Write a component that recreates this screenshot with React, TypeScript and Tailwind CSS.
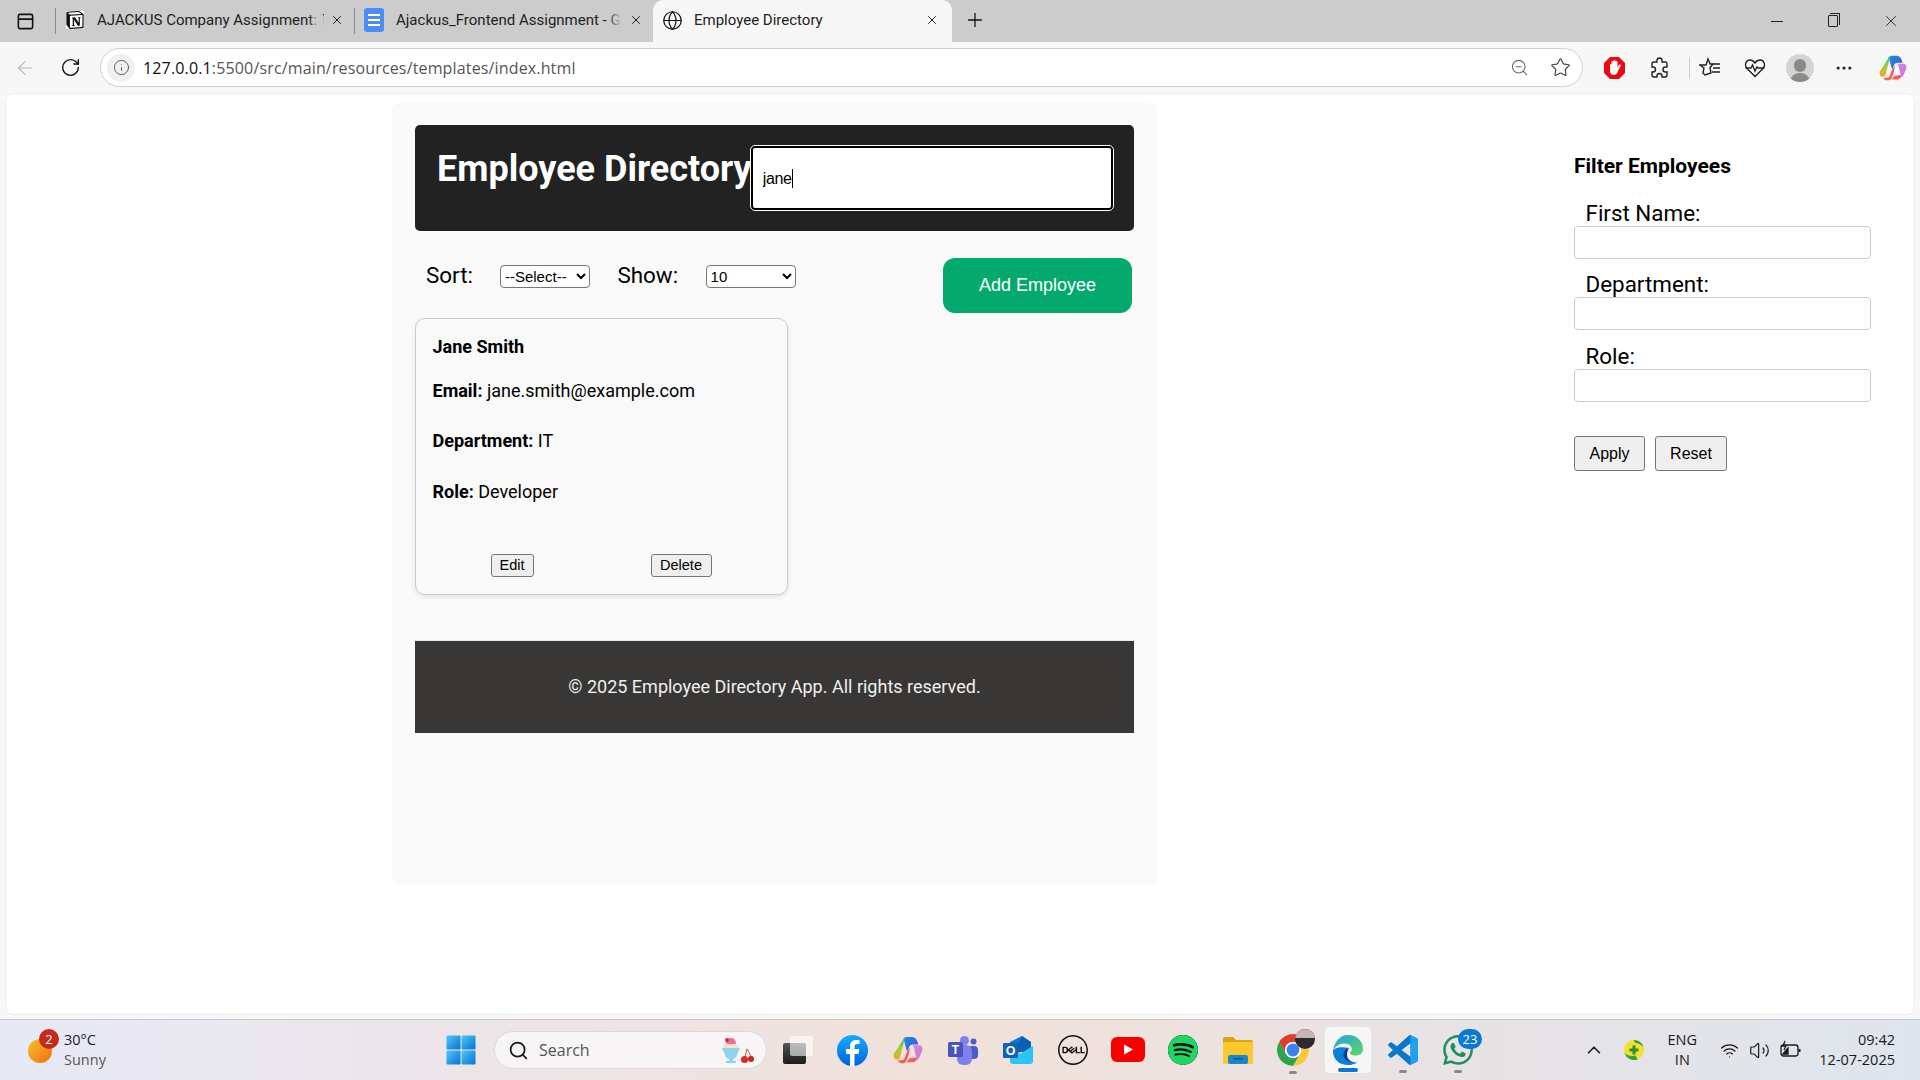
import React from "react";
import {
  ArrowLeft,
  ChevronUp,
  Ellipsis,
  Globe,
  Info,
  PanelTop,
  Plus,
  RotateCw,
  Search,
  Star,
  Volume2,
  Wifi,
  X,
  ZoomOut,
} from "lucide-react";
import { SiDell, SiNotion, SiSpotify, SiWhatsapp } from "react-icons/si";

const Copilot = ({ size = 28 }: { size?: number }) => (
  <svg width={size} height={size} viewBox="0 0 32 32">
    <defs>
      <linearGradient id="cpA" x1="0" y1="0" x2="1" y2="1">
        <stop offset="0" stopColor="#1f8fe0" />
        <stop offset="1" stopColor="#3f4fd8" />
      </linearGradient>
      <linearGradient id="cpB" x1="0" y1="0" x2="1" y2="1">
        <stop offset="0" stopColor="#b98cf0" />
        <stop offset="1" stopColor="#e86fc8" />
      </linearGradient>
      <linearGradient id="cpC" x1="0" y1="0" x2="0" y2="1">
        <stop offset="0" stopColor="#22b8a8" />
        <stop offset="0.5" stopColor="#a5cf3a" />
        <stop offset="1" stopColor="#f4a62a" />
      </linearGradient>
      <linearGradient id="cpD" x1="0" y1="0" x2="1" y2="0">
        <stop offset="0" stopColor="#f5702e" />
        <stop offset="1" stopColor="#f2527a" />
      </linearGradient>
    </defs>
    <path d="M14 2h6c3 0 5 2 6 5l1 3h-6c-2 0-3 1-4 3l-2 5-3-11c-1-3 0-5 2-5z" fill="url(#cpA)" />
    <path d="M10 6c1-3 2-4 5-4-2 1-3 3-3.500 6L8 22c-.5 3-2 4-4 4-3 0-4-3-3-6z" fill="url(#cpC)" />
    <path d="M21 11h7c3 0 4 3 3 6l-3 7c-1 2-2 3-5 3 1.500-1 2-3 1-6l-1-4c-.5-4-1-5-2-6z" fill="url(#cpB)" />
    <path d="M9 27c2 0 3-1 4-4l1-3 4-7c0 4-1 7-2 10-1 3-2 6-4 7H9c-2 0-3-1-4-3z" fill="url(#cpD)" />
    <path d="M14 29h7c2 0 3-1 4-3l-1-2-7 1c-1 2-2 3-3 4z" fill="url(#cpD)" />
  </svg>
);

const WindowsLogo = () => (
  <svg width="30" height="30" viewBox="0 0 30 30">
    <defs>
      <linearGradient id="winG" x1="0" y1="0" x2="1" y2="1">
        <stop offset="0" stopColor="#4fc8f8" />
        <stop offset="1" stopColor="#0772cf" />
      </linearGradient>
    </defs>
    <rect x="0.5" y="0.5" width="14" height="14" rx="1" fill="url(#winG)" />
    <rect x="15.5" y="0.5" width="14" height="14" rx="1" fill="url(#winG)" />
    <rect x="0.5" y="15.5" width="14" height="14" rx="1" fill="url(#winG)" />
    <rect x="15.5" y="15.5" width="14" height="14" rx="1" fill="url(#winG)" />
  </svg>
);

const Facebook = () => (
  <svg width="31" height="31" viewBox="0 0 31 31">
    <defs>
      <linearGradient id="fbG" x1="0" y1="0" x2="0" y2="1">
        <stop offset="0" stopColor="#18acfe" />
        <stop offset="1" stopColor="#0163e0" />
      </linearGradient>
    </defs>
    <circle cx="15.500" cy="15.500" r="15.500" fill="url(#fbG)" />
    <path d="M17.500 31V19h4l.7-5h-4.700v-2.500c0-1.500.6-2.500 2.500-2.500H22.500V5.300C22 5.200 20.500 5 19 5c-3.500 0-6 2.100-6 6v3H9v5h4v12z" fill="#fff" />
  </svg>
);

const Teams = () => (
  <svg width="30" height="30" viewBox="0 0 30 30">
    <circle cx="16.500" cy="5.500" r="4.500" fill="#7b83eb" />
    <circle cx="25.500" cy="6.500" r="3" fill="#5059c9" />
    <rect x="20" y="11" width="10" height="13" rx="4" fill="#5059c9" />
    <rect x="9" y="10" width="15" height="20" rx="6" fill="#7b83eb" />
    <rect x="0" y="7" width="15" height="15" rx="1.500" fill="#4b53bc" />
    <text x="7.500" y="19" fontSize="12" fontWeight="700" textAnchor="middle" fill="#fff" fontFamily="Liberation Sans">T</text>
  </svg>
);

const Outlook = () => (
  <svg width="30" height="28" viewBox="0 0 30 28">
    <path d="M7 6l12-6 9 6v10H7z" fill="#0f78d4" />
    <path d="M19 0l9 6v5L10 20z" fill="#0a4f8f" opacity="0.55" />
    <path d="M7 14l10 4 13-8v15a3 3 0 0 1-3 3H10a3 3 0 0 1-3-3z" fill="#2cc4f2" />
    <rect x="0" y="7" width="15" height="15" rx="1" fill="#0f62b8" />
    <text x="7.500" y="19" fontSize="12.500" fontWeight="700" textAnchor="middle" fill="#fff" fontFamily="Liberation Sans">O</text>
  </svg>
);

const YouTube = () => (
  <svg width="34" height="26" viewBox="0 0 34 26">
    <rect x="0" y="0" width="34" height="25" rx="6" fill="#f70000" />
    <path d="M13 7.500l9 5-9 5z" fill="#fff" />
  </svg>
);

const Folder = () => (
  <svg width="30" height="27" viewBox="0 0 30 27">
    <path d="M0 2a2 2 0 0 1 2-2h8l3 3h15a2 2 0 0 1 2 2v4H0z" fill="#dda013" />
    <rect x="0" y="5" width="30" height="22" rx="1.500" fill="#fbc92e" />
    <rect x="5" y="18" width="20" height="9" rx="2" fill="#1b86c9" />
    <rect x="10" y="21" width="10" height="1.600" fill="#0b5d94" />
  </svg>
);

const Chrome = () => (
  <svg width="32" height="32" viewBox="4 4 40 40">
    <path d="M6.680 14A20 20 0 0 1 41.320 14H24A10 10 0 0 0 15.340 29z" fill="#e33b2e" />
    <path d="M41.320 14A20 20 0 0 1 24 44L32.660 29A10 10 0 0 0 24 14z" fill="#fcc934" />
    <path d="M24 44A20 20 0 0 1 6.680 14L15.340 29A10 10 0 0 0 32.660 29z" fill="#2aa44f" />
    <circle cx="24" cy="24" r="10" fill="#fff" />
    <circle cx="24" cy="24" r="8" fill="#3b82f0" />
  </svg>
);

const Edge = () => (
  <svg width="32" height="32" viewBox="0 0 34 34">
    <defs>
      <linearGradient id="edgeG" x1="0" y1="0" x2="1" y2="1">
        <stop offset="0" stopColor="#1fa3e0" />
        <stop offset="1" stopColor="#62d85f" />
      </linearGradient>
    </defs>
    <path d="M17 1c9 0 16 6 16 15 0 5-4 7-8 7-3 0-6-1-6-3 0-1 2-1 2-4 0-3-3-6-8-6-6 0-11 4-12 9C2 9 8 1 17 1z" fill="url(#edgeG)" />
    <path d="M1 18c0 9 7 15 16 15 4 0 7-1 10-3-5 1-11-1-13-5-2-4 0-9 4-10-8-2-16 0-17 3z" fill="#0c7fd6" />
    <path d="M18 15c-5 1-7 6-5 10 2 4 8 6 13 5-6 0-10-3-10-8 0-3 1-5 2-7z" fill="#0a3d8f" />
  </svg>
);

const VsCode = () => (
  <svg width="30" height="30" viewBox="0 0 100 100">
    <path
      d="M96.500 10.800L75.900.9a6.200 6.200 0 0 0-7.100 1.200L29.700 37.800 12.700 24.800a4.100 4.100 0 0 0-5.300.2L1.900 30.200a4.100 4.100 0 0 0 0 6.100L16.600 50 1.900 63.700a4.100 4.100 0 0 0 0 6.100l5.500 5a4.100 4.100 0 0 0 5.300.2l17-12.900 39.100 35.700a6.200 6.200 0 0 0 7.100 1.200l20.600-9.900a6.200 6.200 0 0 0 3.500-5.600V16.400a6.200 6.200 0 0 0-3.500-5.600zM75 72.700 45.300 50 75 27.300z"
      fill="#0a78c8"
    />
    <path
      d="M68.800 2.100a6.200 6.200 0 0 1 7.100-1.200l20.600 9.900a6.200 6.200 0 0 1 3.500 5.600v67.200a6.200 6.200 0 0 1-3.500 5.600l-20.600 9.900a6.200 6.200 0 0 1-7.100-1.200c2.300 2.300 6.200.7 6.200-2.600V4.700c0-3.300-3.900-4.900-6.200-2.600z"
      fill="#21a0f0"
    />
  </svg>
);

const Sundae = () => (
  <svg width="34" height="28" viewBox="0 0 34 28">
    <path d="M2 12h18l-4 9c-1 1-2 2-3 2v2h3v2H6v-2h3v-2c-1 0-2-1-3-2z" fill="#8ed3ee" />
    <path d="M3 12c0-3 3-5 8-5s8 2 8 5z" fill="#f4e2c2" />
    <path d="M6 8c0-4 2-6 5-6s5 2 5 6c-2-1-3 1-5 0-2 1-3-1-5 0z" fill="#e8709a" />
    <circle cx="7" cy="4" r="2" fill="#d52b2b" />
    <path d="M27 13l-2 8M27 13l4 7" stroke="#7a4a2a" strokeWidth="0.8" fill="none" />
    <circle cx="24.500" cy="23.500" r="3.500" fill="#d52b2b" />
    <circle cx="31" cy="23" r="3" fill="#c82222" />
  </svg>
);

const ShieldDot = () => (
  <svg width="20" height="20" viewBox="0 0 20 20">
    <circle cx="10" cy="10" r="10" fill="#f5e02a" />
    <path d="M0.500 13a10 10 0 0 0 13 6.500l-2-4c-4 1-8 0-11-2.500z" fill="#3a9d3e" />
    <path d="M19.500 7a10 10 0 0 0-10-7l2 3c3 0 6 2 8 4z" fill="#3a9d3e" />
    <path d="M8.500 5.500h3v3h3v3h-3v3h-3v-3h-3v-3h3z" fill="#2a8f35" />
  </svg>
);

const AdBlocker = () => (
  <svg width="21" height="22" viewBox="0 0 21 22">
    <path d="M6 0h9l6 6v10l-6 6H6l-6-6V6z" fill="#ec0a10" />
    <path d="M6 15V8c0-1.500 1.500-1.500 1.500 0V5c0-1.500 2-1.500 2 0V4c0-1.500 2-1.500 2 0v1c0-1.500 2-1.500 2 0v5l1.500-2c1-1 2 0 1.500 1l-2.500 5c-1 3-2.500 4-4.500 4S7 17 6 15z" fill="#fff" />
  </svg>
);

const Extension = () => (
  <svg width="20" height="22" viewBox="0 0 20 22" fill="none" stroke="#222" strokeWidth="1.400">
    <path d="M7 3.500a2.500 2.500 0 0 1 5 0V5h4a2 2 0 0 1 1 2v3h-1.500a2.500 2.500 0 0 0 0 5H17v3a2 2 0 0 1-2 2h-3v-1a2.500 2.500 0 0 0-5 0v1H4a2 2 0 0 1-2-2v-3h1a2.500 2.500 0 0 0 0-5H2V7a2 2 0 0 1 2-2h3z" />
  </svg>
);

const Favorites = () => (
  <svg width="22" height="22" viewBox="0 0 22 22" fill="none" stroke="#222" strokeWidth="1.400">
    <path d="M9 2l2.200 5H14l-3 3.800 1 5.200L6 18l-2-2 1-5L1 8h6z" />
    <path d="M14 7h7M14 11h7M13 15h8" />
  </svg>
);

const HealthHeart = () => (
  <svg width="22" height="20" viewBox="0 0 22 20" fill="none" stroke="#222" strokeWidth="1.400">
    <path d="M11 18.500L3 10.500C0 7 2 2 6 2c2.500 0 4 1.500 5 3 1-1.500 2.500-3 5-3 4 0 6 5 3 8.500z" />
    <path d="M1.500 10H7l1.500-3 2.500 6 2-4 1 1h6.500" fill="#f7f7f7" />
  </svg>
);

const Battery = () => (
  <svg width="22" height="20" viewBox="0 0 22 20" fill="none" stroke="#1a1a1a" strokeWidth="1.300">
    <rect x="1" y="5" width="17" height="11" rx="2.500" />
    <path d="M19.500 9v3" strokeWidth="2" />
    <path d="M3 14l5-6v6z" fill="#1a1a1a" />
    <path d="M5 1L3 6h3l-2 4" />
  </svg>
);

const ProfilePhoto = () => (
  <span className="absolute -top-[5px] -right-[6px] w-[20px] h-[20px] rounded-full bg-[#2c2a2e] overflow-hidden">
    <span className="block w-full h-[9px] bg-[#c9b4b4]" />
  </span>
);

const Dot = () => <span className="absolute bottom-[-8px] left-1/2 -translate-x-1/2 w-[8px] h-[3px] rounded-full bg-[#8a8a8a]" />;

const Tab = ({ icon, title }: { icon: React.ReactNode; title: string }) => (
  <div className="w-[299px] h-[42px] flex items-center pl-[5px] pb-[2px] relative shrink-0">
    <span className="w-[28px] flex justify-center shrink-0">{icon}</span>
    <span className="ml-[8px] w-[227px] overflow-hidden whitespace-nowrap text-[15px] text-[#222]">{title}</span>
    <span className="absolute left-[252px] top-[9px] h-[22px] w-[15px] bg-gradient-to-r from-transparent to-[#cccccc]" />
    <X size={14} strokeWidth={1.6} className="absolute right-[11px] text-[#111]" />
  </div>
);

const Field = ({ label, className }: { label: string; className?: string }) => (
  <div className={className}>
    <label className="block pl-[11.500px] text-[22.400px] leading-[30px] -mb-[2px] text-black">{label}</label>
    <input className="block w-[297px] h-[33px] bg-white border border-[#ccc] rounded-[4px]" readOnly />
  </div>
);

export default function App() {
  return (
    <div className="w-[1920px] h-[1080px] overflow-hidden flex flex-col bg-[#f7f7f7] font-['Roboto',sans-serif] text-black">
      {/* tab strip */}
      <div className="h-[42px] bg-[#cccccc] flex items-center shrink-0">
        <div className="w-[50px] flex justify-center">
          <PanelTop size={19} strokeWidth={2} className="text-[#111]" />
        </div>
        <div className="ml-[5px] w-px h-[26px] bg-[#8a8a8a]" />
        <Tab icon={<SiNotion size={18} className="text-[#111] bg-white" />} title="AJACKUS Company Assignment: T" />
        <div className="w-px h-[26px] bg-[#8a8a8a] -ml-[1px]" />
        <Tab
          icon={
            <span className="w-[20px] h-[24px] rounded-[3px] bg-[#4d8cf5] flex flex-col justify-center gap-[3px] px-[4px]">
              <span className="h-[2px] bg-white" />
              <span className="h-[2px] bg-white" />
              <span className="h-[2px] bg-white" />
            </span>
          }
          title="Ajackus_Frontend Assignment - G"
        />
        <div className="relative w-[299px] h-[42px] -ml-[1px] pl-[5px] pb-[2px] flex items-center bg-[#f7f7f7] rounded-t-[10px] shrink-0">
          <span className="w-[28px] flex justify-center">
            <Globe size={21} strokeWidth={1.4} className="text-[#111]" />
          </span>
          <span className="ml-[8px] text-[15px] text-[#222]">Employee Directory</span>
          <X size={14} strokeWidth={1.6} className="absolute right-[13px] text-[#111]" />
        </div>
        <Plus size={22} strokeWidth={1.4} className="ml-[12px] -mt-[2px] text-[#111]" />
        <div className="ml-auto flex items-center h-[42px]">
          <span className="w-[57px] flex justify-center">
            <span className="block w-[12px] h-px bg-[#222]" />
          </span>
          <span className="w-[57px] flex justify-center relative -ml-[1px]">
            <span className="block w-[10px] h-[12px] border border-[#222] rounded-[1px]" />
            <span className="absolute top-[-2px] left-[26px] w-[10px] h-[12px] border-t border-r border-[#222]" />
          </span>
          <span className="w-[59px] flex justify-center">
            <X size={18} strokeWidth={1.200} className="text-[#222]" />
          </span>
        </div>
      </div>

      {/* toolbar */}
      <div className="h-[51px] flex items-center shrink-0">
        <div className="w-[50px] flex justify-center">
          <ArrowLeft size={22} strokeWidth={1.200} className="text-[#b5b5b5]" />
        </div>
        <div className="w-[40px] flex justify-center">
          <RotateCw size={21} strokeWidth={1.600} className="text-[#111]" />
        </div>
        <div className="ml-[10px] w-[1483px] h-[39px] bg-white border border-[#cfcfcf] rounded-full flex items-center pl-[6px] pr-[11px] shrink-0">
          <span className="w-[28px] h-[28px] rounded-full bg-[#f0f0f0] flex items-center justify-center">
            <Info size={17} strokeWidth={1.300} className="text-[#555]" />
          </span>
          <span className="ml-[8px] text-[16px] text-[#555] font-['Open_Sans',sans-serif] tracking-[0.15px]">
            <span className="text-[#111]">127.0.0.1</span>:5500/src/main/resources/templates/index.html
          </span>
          <ZoomOut size={19} strokeWidth={1.300} className="ml-auto mr-[1px] text-[#666]" />
          <Star size={21} strokeWidth={1.300} className="ml-[20px] text-[#444]" />
        </div>
        <div className="flex-1 flex items-center">
          <span className="w-[62px] flex justify-center"><AdBlocker /></span>
          <span className="w-[29px] flex justify-center"><Extension /></span>
          <span className="w-px h-[22px] bg-[#ccc] ml-[15px]" />
          <span className="w-[40px] flex justify-center"><Favorites /></span>
          <span className="w-[50px] flex justify-center"><HealthHeart /></span>
          <span className="ml-[6px] w-[28px] h-[28px] rounded-full bg-[#d4d4d4] flex flex-col items-center justify-end overflow-hidden">
            <span className="w-[12px] h-[13px] rounded-full bg-[#8c8a87] mb-[1px]" />
            <span className="w-[20px] h-[9px] rounded-t-full bg-[#8c8a87]" />
          </span>
          <span className="w-[60px] flex justify-center"><Ellipsis size={20} strokeWidth={1.800} className="text-[#222]" /></span>
          <span className="flex justify-center ml-[5px]"><Copilot size={28} /></span>
        </div>
      </div>

      {/* page */}
      <div className="flex-1 px-[5px] pb-[4px] border-b border-[#c8c8c8] min-h-0">
        <div className="h-full bg-white rounded-[8px] border border-[#ececec] flex items-start pl-[386px]">
          <main className="mt-[9px] w-[765px] h-[781px] bg-[#fafafa] rounded-[8px] px-[23px] pt-[22px] shrink-0">
            <header className="h-[106px] bg-[#222222] rounded-[5px] flex items-start pl-[22px] pt-[21px]">
              <h1 className="text-[36px] leading-[42px] font-bold text-white whitespace-nowrap mt-[2px]">Employee Directory</h1>
              <div className="relative shrink-0 -ml-[1px]">
                <input
                  value="jane"
                  readOnly
                  className="block w-[362px] h-[64px] pl-[10px] pt-[2px] bg-white border-2 border-black rounded-[4px] outline-1 outline-white text-[16px] tracking-[-0.3px] text-black font-['Liberation_Sans',Arial,sans-serif]"
                />
                <span className="absolute left-[41px] top-[23px] w-px h-[19px] bg-black" />
              </div>
            </header>

            <div className="flex items-start mt-[27px]">
              <label className="ml-[11px] mt-[2.500px] text-[22.400px] leading-[28px]">Sort:</label>
              <select className="ml-[27px] mt-[7px] w-[90px] h-[23px] bg-white border border-[#767676] rounded-[4px] text-[15px] font-['Liberation_Sans',Arial,sans-serif]">
                <option>--Select--</option>
              </select>
              <label className="ml-[27.500px] mt-[2.500px] text-[22.400px] leading-[28px]">Show:</label>
              <select className="ml-[27.500px] mt-[7px] w-[90px] h-[23px] bg-white border border-[#767676] rounded-[4px] text-[15px] font-['Liberation_Sans',Arial,sans-serif]">
                <option>10</option>
              </select>
              <button className="ml-auto mr-[2px] w-[189px] h-[55px] bg-[#04aa6d] rounded-[12px] text-[18px] text-white font-['Liberation_Sans',Arial,sans-serif]">
                Add Employee
              </button>
            </div>

            <section className="mt-[5px] w-[373px] h-[277px] bg-[#f9f9f9] border border-[#ccc] rounded-[10px] shadow-[0_2px_5px_rgba(0,0,0,0.1)] pl-[16.500px] pt-[16px]">
              <h3 className="text-[18px] leading-[24px] font-bold">Jane Smith</h3>
              <p className="mt-[20px] text-[18px] leading-[24px]"><strong className="font-bold">Email:</strong> jane.smith@example.com</p>
              <p className="mt-[26px] text-[18px] leading-[24px]"><strong className="font-bold">Department:</strong> IT</p>
              <p className="mt-[27px] text-[18px] leading-[24px]"><strong className="font-bold">Role:</strong> Developer</p>
              <div className="flex mt-[50px] pl-[58px] gap-[117px] font-['Liberation_Sans',Arial,sans-serif]">
                <button className="w-[43px] h-[23px] bg-[#efefef] border border-[#767676] rounded-[3px] text-[14.500px] leading-none">Edit</button>
                <button className="w-[61px] h-[23px] bg-[#efefef] border border-[#767676] rounded-[3px] text-[14.500px] leading-none">Delete</button>
              </div>
            </section>

            <footer className="mt-[45px] h-[93px] pb-[2px] bg-[#383735] border-t border-[#e6e6e6] flex items-center justify-center text-[18px] text-[#f0f0f0]">
              © 2025 Employee Directory App. All rights reserved.
            </footer>
          </main>

          <aside className="ml-[417px] mt-[60px] w-[297px] shrink-0">
            <h3 className="text-[21px] leading-[24px] font-bold">Filter Employees</h3>
            <div className="mt-[20px] flex flex-col gap-[10px]">
              <Field label="First Name:" />
              <Field label="Department:" />
              <Field label="Role:" className="mt-[1px]" />
            </div>
            <div className="mt-[34px] flex gap-[10px] font-['Liberation_Sans',Arial,sans-serif]">
              <button className="w-[71px] h-[35px] bg-[#efefef] border border-[#767676] rounded-[3px] text-[16px]">Apply</button>
              <button className="w-[72px] h-[35px] bg-[#efefef] border border-[#767676] rounded-[3px] text-[16px]">Reset</button>
            </div>
          </aside>
        </div>
      </div>

      {/* taskbar */}
      <div className="h-[60px] shrink-0 flex items-center bg-gradient-to-r from-[#e7e9f6] via-[#f1e1da] to-[#dfe5ee] font-['Open_Sans',sans-serif]">
        <div className="w-[433px] flex items-center pl-[28px] shrink-0">
          <span className="relative w-[24px] h-[24px] rounded-full bg-gradient-to-br from-[#f2c12e] to-[#f26a0a] mt-[2px]">
            <span className="absolute -top-[10px] left-[11px] w-[20px] h-[20px] rounded-full bg-[#c42b1c] text-white text-[13px] leading-[20px] text-center">2</span>
          </span>
          <div className="ml-[12px] text-[14.500px] leading-[20px] text-[#1b1b1b]">
            <div>30°C</div>
            <div className="text-[#555]">Sunny</div>
          </div>
        </div>
        <span className="w-[56px] flex justify-center shrink-0"><WindowsLogo /></span>
        <div className="ml-[5px] w-[273px] h-[38px] bg-[#f8f5f6] border border-[#dcd8da] rounded-full flex items-center pl-[13px] pr-[13px] shrink-0">
          <Search size={21} strokeWidth={2} className="text-[#1a1a1a]" />
          <span className="ml-[10px] text-[16px] text-[#555]">Search</span>
          <span className="ml-auto -mr-[1px]"><Sundae /></span>
        </div>
        <div className="ml-[3px] flex items-center shrink-0">
          <span className="w-[55px] flex justify-center">
            <span className="relative block w-[30px] h-[28px]">
              <span className="absolute left-0 bottom-0 w-[23px] h-[21px] rounded-[2px] bg-gradient-to-b from-[#555] to-[#1c1c1c]" />
              <span className="absolute right-0 top-0 w-[23px] h-[20px] rounded-[2px] bg-white/60" />
            </span>
          </span>
          <span className="w-[55px] flex justify-center"><Facebook /></span>
          <span className="w-[55px] flex justify-center"><Copilot size={30} /></span>
          <span className="w-[55px] flex justify-center"><Teams /></span>
          <span className="w-[55px] flex justify-center"><Outlook /></span>
          <span className="w-[55px] flex justify-center"><SiDell size={30} className="text-[#111]" /></span>
          <span className="w-[55px] flex justify-center"><YouTube /></span>
          <span className="w-[55px] flex justify-center"><SiSpotify size={30} className="text-[#1ed760] bg-[#111] rounded-full" /></span>
          <span className="w-[55px] flex justify-center"><Folder /></span>
          <span className="relative w-[55px] flex justify-center">
            <span className="relative block"><Chrome /><ProfilePhoto /></span>
            <Dot />
          </span>
          <span className="w-[55px] flex justify-center">
            <span className="relative w-[48px] h-[48px] flex items-center justify-center bg-[#f6f6f6] border border-[#e6e6e6] rounded-[5px]">
              <Edge />
              <span className="absolute bottom-[1px] left-1/2 -translate-x-1/2 w-[20px] h-[4px] rounded-full bg-[#0a78d4]" />
            </span>
          </span>
          <span className="relative w-[55px] flex justify-center"><VsCode /><Dot /></span>
          <span className="relative w-[55px] flex justify-center">
            <SiWhatsapp size={30} className="text-[#1f8f5f]" />
            <span className="absolute -top-[6px] left-[28px] w-[24px] h-[20px] rounded-full bg-[#0a78d4] text-white text-[13px] leading-[20px] text-center">23</span>
            <Dot />
          </span>
        </div>
        <div className="ml-auto flex items-center pr-[25px]">
          <ChevronUp size={22} strokeWidth={1.800} className="text-[#1a1a1a]" />
          <span className="ml-[19px]"><ShieldDot /></span>
          <div className="ml-[20px] w-[36px] text-center text-[14.500px] leading-[20px] text-[#1a1a1a]">
            <div>ENG</div>
            <div>IN</div>
          </div>
          <Wifi size={19} strokeWidth={1.600} className="ml-[20px] text-[#1a1a1a]" />
          <Volume2 size={21} strokeWidth={1.400} className="ml-[10px] text-[#1a1a1a]" />
          <span className="ml-[10px]"><Battery /></span>
          <div className="ml-[17px] text-right text-[14.500px] leading-[20px] text-[#1a1a1a]">
            <div>09:42</div>
            <div>12-07-2025</div>
          </div>
        </div>
      </div>
    </div>
  );
}
